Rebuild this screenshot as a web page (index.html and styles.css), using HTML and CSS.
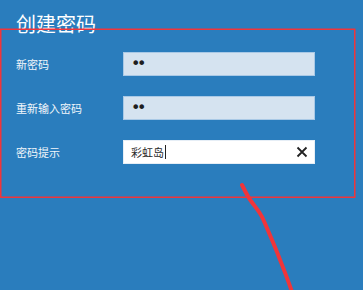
FILE: index.html
```html
<!DOCTYPE html>
<html lang="zh-CN">
<head>
<meta charset="utf-8">
<title>创建密码</title>
<link rel="stylesheet" href="styles.css">
</head>
<body>
<div class="page">
  <h1 class="title">创建密码</h1>
  <div class="form">
    <div class="label">新密码</div>
    <div class="field field-pw"><span class="dots">••</span></div>
    <div class="label">重新输入密码</div>
    <div class="field field-pw"><span class="dots">••</span></div>
    <div class="label">密码提示</div>
    <div class="field field-active">
      <span class="value">彩虹岛</span><span class="caret"></span>
      <svg class="clear" width="12" height="12" viewBox="0 0 12 12"><path d="M1.5 1.5 L10.5 10.5 M10.5 1.5 L1.5 10.5" stroke="#222" stroke-width="1.8" fill="none"/></svg>
    </div>
  </div>
  <svg class="annot" width="363" height="290" viewBox="0 0 363 290">
    <rect x="0.75" y="29.25" width="354" height="168" fill="none" stroke="#f0353a" stroke-width="1.5"/>
    <path d="M242 185 C245 191 248 197 251 201 C256 208 260 212 263 219 C268 230 272 240 277 252 C282 265 287 277 292 292" fill="none" stroke="#f0353a" stroke-width="4" stroke-linecap="round"/>
  </svg>
</div>
</body>
</html>
```
FILE: styles.css
```css
html, body {
  margin: 0;
  padding: 0;
  background: #2a7dbd;
}
.page {
  position: relative;
  width: 363px;
  height: 290px;
  overflow: hidden;
  box-sizing: border-box;
  padding: 11px 0 0 16px;
  font-family: "Noto Sans CJK SC", "Noto Sans", sans-serif;
  color: #fff;
}
.title {
  margin: 0;
  font-size: 20px;
  font-weight: normal;
  line-height: 26px;
  letter-spacing: 0;
}
.form {
  margin-top: 15px;
  display: grid;
  grid-template-columns: 107px 192px;
  grid-auto-rows: 24px;
  row-gap: 20px;
  align-items: center;
}
.label {
  font-size: 11px;
  line-height: 14px;
  color: #f2f7fb;
}
.field {
  height: 24px;
  box-sizing: border-box;
  display: flex;
  align-items: center;
  padding-left: 7px;
  position: relative;
}
.field-pw {
  background: #d5e3f0;
  border: 1px solid #a9c9e6;
}
.dots {
  color: #1f1f1f;
  font-family: "DejaVu Sans", sans-serif;
  font-size: 16px;
  letter-spacing: -3.4px;
  line-height: 1;
}
.field-active {
  background: #ffffff;
  border: 1px solid #e6eef6;
}
.value {
  color: #2a2a2a;
  font-size: 11px;
  line-height: 14px;
}
.caret {
  display: inline-block;
  width: 1px;
  height: 14px;
  background: #222;
  margin-left: 1px;
}
.clear {
  margin-left: auto;
  margin-right: 6px;
}
.annot {
  position: absolute;
  left: 0;
  top: 0;
  pointer-events: none;
}
```
